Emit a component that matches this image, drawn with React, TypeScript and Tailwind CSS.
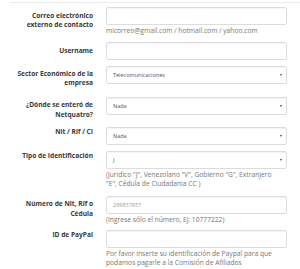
import React from 'react';

// Campos del formulario de registro de afiliados
interface IField {
    label: string[];
    kind: 'input' | 'select';
    value?: string;
    valueClass?: string;
    help?: string[];
    rowClass: string;
    labelClass: string;
}

const fields: IField[] = [
    {
        label: ['Correo electrónico', 'externo de contacto'],
        kind: 'input',
        help: ['micorreo@gmail.com / hotmail.com / yahoo.com'],
        rowClass: 'h-[35px]',
        labelClass: 'pt-[3.5px]',
    },
    { label: ['Username'], kind: 'input', rowClass: 'h-[24px]', labelClass: 'pt-[3.5px]' },
    {
        label: ['Sector Económico de la', 'empresa'],
        kind: 'select',
        value: 'Telecomunicaciones',
        rowClass: 'h-[31px]',
        labelClass: 'pt-[2.5px]',
    },
    {
        label: ['¿Dónde se enteró de', 'Netquatro?'],
        kind: 'select',
        value: 'Nada',
        rowClass: 'h-[30px]',
        labelClass: 'pt-[3px]',
    },
    { label: ['Nit / Rif / CI'], kind: 'select', value: 'Nada', rowClass: 'h-[24px]', labelClass: 'pt-0' },
    {
        label: ['Tipo de Identificación'],
        kind: 'select',
        value: 'J',
        help: ['(Juridico "J", Venezolano "V", Gobierno "G", Extranjero', '"E", Cédula de Ciudadania CC )'],
        rowClass: 'h-[45px]',
        labelClass: 'pt-0',
    },
    {
        label: ['Número de Nit, Rif o', 'Cédula'],
        kind: 'input',
        value: '299837857',
        valueClass: 'text-[#9a9a9a]',
        help: ['(Ingrese sólo el número, Ej: 10777222)'],
        rowClass: 'h-[34px]',
        labelClass: 'pt-[3px]',
    },
    {
        label: ['ID de PayPal'],
        kind: 'input',
        help: ['Por favor inserte su identificación de Paypal para que', 'podamos pagarle a la Comisión de Afiliados'],
        rowClass: 'h-[39px]',
        labelClass: 'pt-0',
    },
];

const App: React.FC = () => {
    return (
        <div className="w-[300px] h-[269px] overflow-hidden bg-white font-['Open_Sans',sans-serif]">
            <div className="ml-[10px] mt-[2px] border-t border-[#ececec] pt-[4px]">
                {fields.map((f, i) => (
                    <div key={i} className={`grid grid-cols-[83px_181px] gap-x-[13px] ${f.rowClass}`}>
                        {/* etiqueta */}
                        <div className={`text-right text-[6.6px] leading-[9.5px] font-bold text-[#383838] ${f.labelClass}`}>
                            {f.label.map((l, j) => (
                                <div key={j}>{l}</div>
                            ))}
                        </div>
                        <div>
                            <div className="h-[18px] flex items-center justify-between border border-[#dcdcdc] rounded-[2px] bg-white shadow-[inset_0_1px_1px_rgba(0,0,0,0.05)] pl-[6px] pr-[4px]">
                                <span className={`text-[5.5px] ${f.valueClass ?? 'text-[#555]'}`}>{f.value ?? ''}</span>
                                {f.kind === 'select' && (
                                    <span className="w-0 h-0 border-l-[1.5px] border-r-[1.5px] border-t-[2px] border-l-transparent border-r-transparent border-t-[#444]" />
                                )}
                            </div>
                            {f.help && (
                                <div className="mt-[0.5px] text-[6.7px] leading-[9.5px] text-[#777]">
                                    {f.help.map((h, j) => (
                                        <div key={j}>{h}</div>
                                    ))}
                                </div>
                            )}
                        </div>
                    </div>
                ))}
            </div>
        </div>
    );
};

export default App;
